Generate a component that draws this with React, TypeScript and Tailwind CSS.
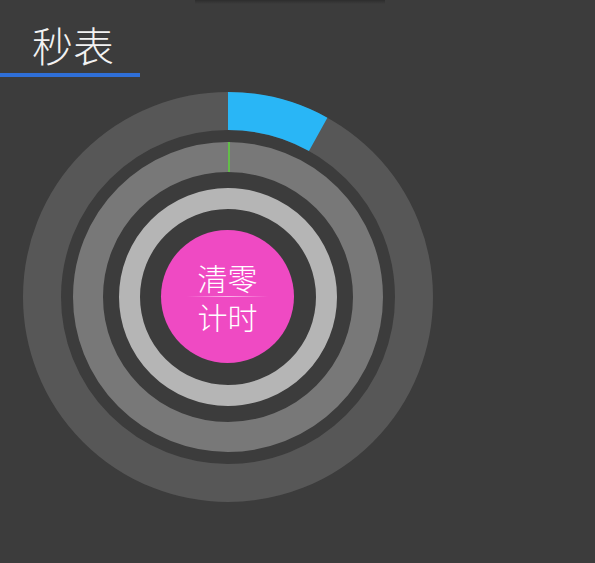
import React from "react";

const CX = 205;
const CY = 205;

// point on a circle, angle in degrees clockwise from 12 o'clock
function pt(r: number, deg: number) {
  const a = (deg * Math.PI) / 180;
  return [CX + r * Math.sin(a), CY - r * Math.cos(a)];
}

function arcPath(rOut: number, rIn: number, from: number, to: number) {
  const [x1, y1] = pt(rOut, from);
  const [x2, y2] = pt(rOut, to);
  const [x3, y3] = pt(rIn, to);
  const [x4, y4] = pt(rIn, from);
  const large = to - from > 180 ? 1 : 0;
  return `M${x1} ${y1} A${rOut} ${rOut} 0 ${large} 1 ${x2} ${y2} L${x3} ${y3} A${rIn} ${rIn} 0 ${large} 0 ${x4} ${y4} Z`;
}

export default function App() {
  const seconds = 29; // blue progress, degrees
  return (
    <div
      className="w-[595px] h-[563px] bg-[#3c3c3c] overflow-hidden"
      style={{ fontFamily: '"Noto Sans CJK SC", "Noto Sans", sans-serif' }}
    >
      <header className="relative">
        <div className="absolute top-0 left-[195px] w-[190px] h-[4px] bg-linear-to-b from-black/25 to-transparent" />
        <div className="h-[73px] pl-8 pt-[24px]">
          <h1 className="text-[41px] leading-[41px] font-light text-[#f2f2f2]">秒表</h1>
        </div>
        <div className="h-1 w-[140px] bg-[#2f6fd8]" />
      </header>

      <div className="relative ml-[23px] mt-[15px] w-[410px] h-[410px]">
        <svg width="410" height="410" viewBox="0 0 410 410" className="block">
          <circle cx={CX} cy={CY} r={186} fill="none" stroke="#575757" strokeWidth={38} />
          <path d={arcPath(205, 167, 0, seconds)} fill="#29b6f6" />
          <circle cx={CX} cy={CY} r={140} fill="none" stroke="#787878" strokeWidth={30} />
          <line x1={206} y1={50} x2={206} y2={80} stroke="#5cd43a" strokeWidth={1.5} />
          <circle cx={CX} cy={CY} r={98.5} fill="none" stroke="#b5b5b5" strokeWidth={21} />
        </svg>

        <button className="absolute left-[138px] top-[138px] w-[133px] h-[133px] rounded-full bg-[#ef4ac3] flex flex-col items-center justify-center text-white font-light">
          <span className="text-[30px] leading-[36px]">清零</span>
          <span className="h-px w-[81px] my-px bg-linear-to-r from-transparent via-[#fbb9ea] to-transparent" />
          <span className="text-[30px] leading-[36px]">计时</span>
        </button>
      </div>
    </div>
  );
}
